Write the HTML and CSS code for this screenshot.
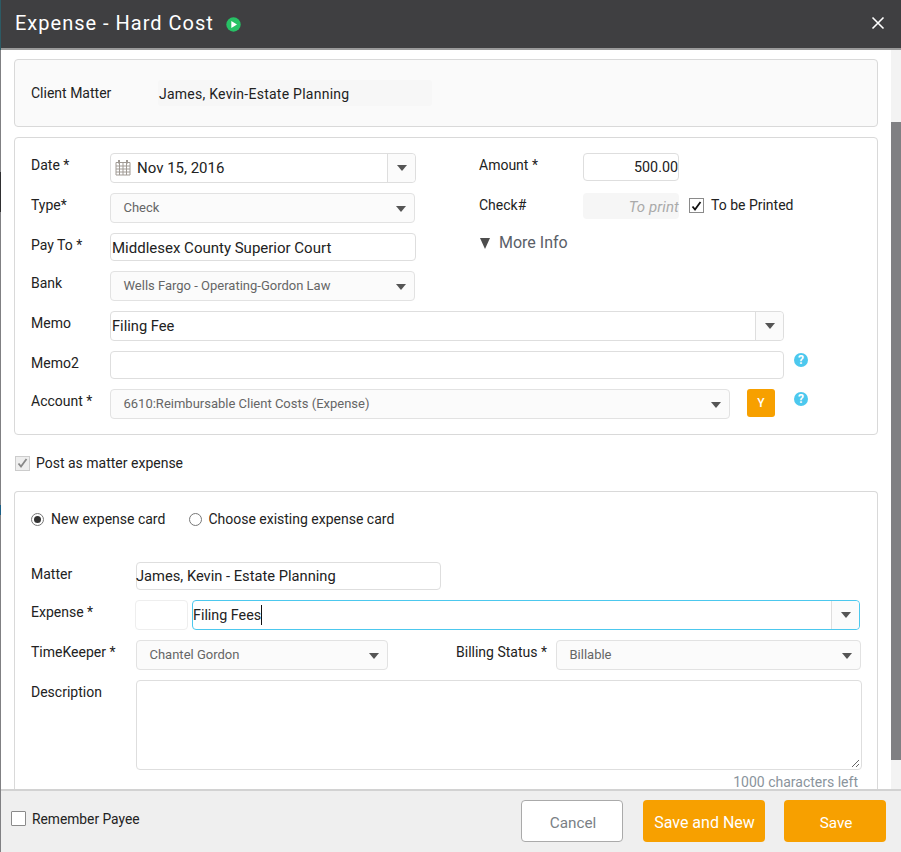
FILE: index.html
```html
<!DOCTYPE html>
<html lang="en">
<head>
<meta charset="utf-8">
<title>Expense - Hard Cost</title>
<link rel="stylesheet" href="styles.css">
</head>
<body>
<div class="modal">
  <header class="head">
    <h1 class="title">Expense - Hard Cost</h1>
    <svg class="play" width="15" height="15" viewBox="0 0 15 15"><circle cx="7.5" cy="7.5" r="7.2" fill="#27c165"/><path d="M5.3 3.9 L11 7.5 L5.3 11.1 Z" fill="#fff"/></svg>
    <svg class="close" width="14" height="14" viewBox="0 0 14 14"><path d="M1.5 1.5 L12.5 12.5 M12.5 1.5 L1.5 12.5" stroke="#fff" stroke-width="1.6"/></svg>
  </header>
  <div class="middle">
    <main class="scroll">
      <section class="panel client">
        <span class="label client-label">Client Matter</span>
        <div class="client-value">James, Kevin-Estate Planning</div>
      </section>

      <section class="panel main-panel">
        <div class="top">
          <div class="col-left">
            <div class="row h30">
              <span class="label">Date *</span>
              <div class="field w306 combo">
                <svg class="cal" width="16" height="17" viewBox="0 0 16 17"><path d="M1 3.5 H15 V16 H1 Z M1 7 H15 M1 10 H15 M1 13 H15 M4.5 3.5 V16 M8 3.5 V16 M11.5 3.5 V16" fill="none" stroke="#a09a94" stroke-width="1"/><path d="M4 1 V4.5 M12 1 V4.5" stroke="#a09a94" stroke-width="2"/></svg>
                <span class="value grow big">Nov 15, 2016</span>
                <span class="combo-btn"><i class="caret"></i></span>
              </div>
            </div>
            <div class="row h30">
              <span class="label">Type*</span>
              <div class="select w305"><span>Check</span><i class="caret"></i></div>
            </div>
            <div class="row h28">
              <span class="label">Pay To *</span>
              <div class="field w306"><span class="value big payto">Middlesex County Superior Court</span></div>
            </div>
            <div class="row h30">
              <span class="label">Bank</span>
              <div class="select w305"><span>Wells Fargo - Operating-Gordon Law</span><i class="caret"></i></div>
            </div>
          </div>
          <div class="col-right">
            <div class="row h28 rr1">
              <span class="label lab-r">Amount *</span>
              <div class="field w96 right"><span class="value">500.00</span></div>
            </div>
            <div class="row rr2">
              <span class="label lab-r">Check#</span>
              <div class="readonly">To print</div>
              <span class="check on"><svg width="11" height="10" viewBox="0 0 11 10"><path d="M1.5 5.5 L4 8.5 L9.5 1" fill="none" stroke="#111" stroke-width="1.8"/></svg></span>
              <span class="label printed">To be Printed</span>
            </div>
            <div class="more"><i class="more-tri"></i>More Info</div>
          </div>
        </div>
        <div class="row h30">
          <span class="label">Memo</span>
          <div class="field w674 combo"><span class="value grow mid">Filing Fee</span><span class="combo-btn"><i class="caret"></i></span></div>
        </div>
        <div class="row h28">
          <span class="label">Memo2</span>
          <div class="field w674"></div>
          <span class="help help-a">?</span>
        </div>
        <div class="row h30">
          <span class="label">Account *</span>
          <div class="select w620"><span>6610:Reimbursable Client Costs (Expense)</span><i class="caret"></i></div>
          <button class="y-btn">Y</button>
          <span class="help help-b">?</span>
        </div>
      </section>

      <div class="post">
        <span class="check disabled"><svg width="11" height="10" viewBox="0 0 11 10"><path d="M1.5 5.5 L4 8.5 L9.5 1" fill="none" stroke="#888" stroke-width="1.8"/></svg></span>
        <span class="label">Post as matter expense</span>
      </div>

      <section class="panel card">
        <div class="radios">
          <span class="radio on"></span><span class="label">New expense card</span>
          <span class="radio r2"></span><span class="label">Choose existing expense card</span>
        </div>
        <div class="row h28">
          <span class="label w105">Matter</span>
          <div class="field w305"><span class="value mid matter-text">James, Kevin - Estate Planning</span></div>
        </div>
        <div class="row h30">
          <span class="label w104">Expense *</span>
          <div class="code-box"></div>
          <div class="field focus combo"><span class="value grow"><span class="typed">Filing Fees</span></span><span class="combo-btn"><i class="caret"></i></span></div>
        </div>
        <div class="row h30">
          <span class="label w105">TimeKeeper *</span>
          <div class="select w252"><span>Chantel Gordon</span><i class="caret"></i></div>
          <span class="label billing">Billing Status *</span>
          <div class="select w305"><span>Billable</span><i class="caret"></i></div>
        </div>
        <div class="row h90">
          <span class="label w105">Description</span>
          <div class="area"><svg class="grip" width="9" height="9" viewBox="0 0 9 9"><path d="M8 1 L1 8 M8 5 L5 8" stroke="#666" stroke-width="1"/></svg></div>
        </div>
        <div class="count">1000 characters left</div>
      </section>
    </main>
    <div class="track"><div class="thumb"></div></div>
  </div>
  <footer class="foot">
    <span class="check blank"></span>
    <span class="label remember">Remember Payee</span>
    <button class="btn cancel">Cancel</button>
    <button class="btn primary btn-new">Save and New</button>
    <button class="btn primary btn-save">Save</button>
  </footer>
</div>
</body>
</html>
```
FILE: styles.css
```css
* { box-sizing: border-box; }
html, body { margin: 0; height: 100%; overflow: hidden; }
body { background: linear-gradient(to bottom, #2c5a64 0 50px, #808083 50px 172px, #2f2f31 172px 212px, #808083 212px 505px, #1a5f86 505px 515px, #808083 515px); font-family: Roboto, "Liberation Sans", sans-serif; color: #222; }
.modal { margin-left: 1px; height: 852px; display: flex; flex-direction: column; background: #fff; }

.head { flex: none; height: 50px; background: #3f3f41; border-bottom: 2px solid #9a9a9a; display: flex; align-items: center; padding: 0 16px 3px 14px; }
.title { margin: 0; font-size: 20px; font-weight: 400; color: #fff; letter-spacing: 1px; line-height: 24px; }
.play { margin-left: 12px; margin-top: 4px; }
.close { margin-left: auto; }

.middle { flex: 1; min-height: 0; display: flex; }
.scroll { width: 890px; overflow: hidden; padding: 9px 13px 0 13px; }
.track { flex: none; width: 10px; background: #f3f3f3; padding-top: 72px; }
.thumb { height: 638px; background: #808083; }

.panel { border: 1px solid #d9d9d9; border-radius: 4px; }
.label { font-size: 14px; line-height: 16px; color: #222; white-space: nowrap; }

.client { height: 68px; background: #fafafa; display: flex; align-items: center; padding: 0 16px; margin-bottom: 10px; }
.client-label { width: 126px; margin-top: 0; }
.client-value { width: 274px; height: 26px; margin-left: 1px; background: #f7f7f7; font-size: 14px; letter-spacing: 0.25px; line-height: 28px; color: #222; border-radius: 3px; padding-left: 1px; }

.main-panel { height: 298px; padding: 15px 16px 0; }
.top { display: flex; }
.col-left { width: 448px; }
.col-right { flex: 1; }

.row { display: flex; margin-bottom: 10px; }
.row > .label { width: 79px; padding-top: 4px; }
.h28 { height: 28px; }
.h30 { height: 30px; }
.h90 { height: 90px; }

.field { height: 100%; border: 1px solid #dedede; border-radius: 4px; background: #fff; display: flex; align-items: center; padding-left: 1px; }
.value { font-size: 14.3px; line-height: 18px; color: #222; white-space: nowrap; }
.value.big { font-size: 15px; }
.value.mid { font-size: 14.7px; }
.payto { margin-top: 2px; }
.matter-text { margin-left: -2px; }
.grow { flex: 1; }
.w306 { width: 306px; }
.w305 { width: 305px; }
.w96 { width: 96px; }
.w674 { width: 674px; }
.w620 { width: 620px; }
.w252 { width: 252px; }
.combo { padding-right: 0; }
.combo-btn { width: 28px; height: 100%; border-left: 1px solid #dedede; background: #fbfbfb; border-radius: 0 4px 4px 0; display: flex; align-items: center; justify-content: center; }
.cal { margin: -2px 6px 0 3px; flex: none; }

.caret { display: block; width: 0; height: 0; border-left: 5px solid transparent; border-right: 5px solid transparent; border-top: 6px solid #555; }
.select { height: 100%; border: 1px solid #e2e2e2; border-radius: 4px; background: #fbfbfb; display: flex; align-items: center; justify-content: space-between; padding: 0 8px 0 12.5px; font-size: 13px; color: #666; white-space: nowrap; }
.select > span { margin-top: -2px; }
.select .caret { margin-top: 2px; }

.right { justify-content: flex-end; padding-right: 0; }
.rr1 { margin-bottom: 12px; }
.rr2 { height: 26px; margin-bottom: 15px; }
.col-right .row > .lab-r { width: 104px; padding-top: 4px; }
.readonly { width: 96px; height: 26px; background: #f6f6f6; border-radius: 4px; font-size: 15px; letter-spacing: 0.1px; font-style: italic; color: #aaa; text-align: right; line-height: 28px; }
.check { flex: none; width: 15px; height: 15px; border: 1px solid #8a8a8a; background: #fff; display: flex; align-items: center; justify-content: center; }
.check.on { margin: 5px 7px 0 10px; }
.row > .printed { width: auto; padding-top: 4px; }
.more { font-size: 16px; line-height: 18px; color: #5a6068; display: flex; align-items: center; margin-left: 1px; }
.more-tri { width: 0; height: 0; border-left: 5.5px solid transparent; border-right: 5.5px solid transparent; border-top: 11px solid #4d4d4d; margin-right: 9px; }

.help { flex: none; width: 14px; height: 14px; border-radius: 50%; background: #4cc8ee; color: #fff; font-size: 12px; font-weight: 700; line-height: 14px; text-align: center; }
.help-a { margin: 2px 0 0 10px; }
.help-b { margin: 3px 0 0 19px; }
.y-btn { flex: none; width: 28px; height: 28px; margin-left: 17px; border: 0; border-radius: 3px; background: #f7a000; color: #fff; font: 500 12px Roboto, sans-serif; padding: 0; }

.post { display: flex; align-items: center; height: 56px; padding-left: 1px; }
.post .label { margin-left: 6px; }
.check.disabled { background: #eee; border-color: #ccc; }

.card { height: 330px; padding: 18px 16px 0; border-bottom: 0; border-radius: 4px 4px 0 0; }
.radios { display: flex; align-items: center; height: 18px; margin-bottom: 34px; }
.radio { width: 13px; height: 13px; border: 1px solid #777; border-radius: 50%; background: #fff; margin-right: 7px; flex: none; position: relative; }
.radio.on::after { content: ""; position: absolute; left: 2px; top: 2px; width: 7px; height: 7px; background: #333; border-radius: 50%; }
.r2 { margin-left: 24px; margin-right: 6px; }
.row > .w105 { width: 105px; }
.row > .w104 { width: 104px; }
.code-box { width: 53px; height: 100%; border: 1px solid #eee; border-radius: 4px; margin-right: 4px; }
.focus { flex: 1; border-color: #4cc8ee; margin-right: 1px; padding-left: 0; }
.typed { border-right: 1px solid #111; padding: 2px 0; }
.row > .billing { width: 100px; margin-left: 68px; }
.area { flex: 1; margin-right: -1px; height: 90px; border: 1px solid #dedede; border-radius: 4px; position: relative; }
.grip { position: absolute; right: 1px; bottom: 1px; }
.card .h90 { margin-bottom: 5px; }
.count { font-size: 14px; line-height: 14px; color: #8a949c; text-align: right; padding-right: 3px; }

.foot { flex: none; height: 63px; background: #efefef; border-top: 2px solid #d2d2d2; display: flex; align-items: center; padding: 0 15px 0 10px; }
.check.blank { width: 15px; height: 15px; margin-top: -6px; border-radius: 1px; }
.remember { margin-left: 6px; margin-top: -6px; font-size: 13.8px; }
.btn { height: 42px; border-radius: 4px; font: 400 15.3px Roboto, sans-serif; padding: 3px 0 0 2px; margin-top: -1px; }
.cancel { width: 102px; margin-left: auto; background: #fff; border: 1px solid #aaa; color: #7a7f85; }
.primary { border: 0; background: #f7a000; color: #fff; }
.btn-new { width: 122px; margin-left: 20px; font-size: 16px; padding-left: 1px; }
.btn-save { width: 102px; margin-left: 19px; }
```
